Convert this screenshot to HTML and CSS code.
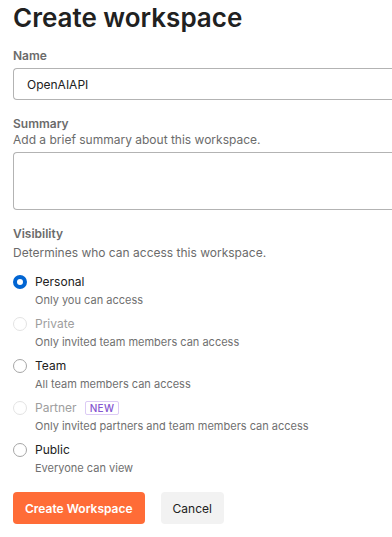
FILE: index.html
```html
<!DOCTYPE html>
<html lang="en">
<head>
    <meta charset="UTF-8">
    <meta name="viewport" content="width=device-width, initial-scale=1.0">
    <title>Create workspace</title>
    <link rel="stylesheet" href="styles.css">
</head>
<body>
    <h1 class="title">Create workspace</h1>

    <div class="field">
        <label class="label" for="wsName">Name</label>
        <input class="input" id="wsName" type="text" value="OpenAIAPI">
    </div>

    <div class="field">
        <label class="label" for="wsSummary">Summary</label>
        <div class="hint">Add a brief summary about this workspace.</div>
        <textarea class="textarea" id="wsSummary"></textarea>
    </div>

    <div class="field">
        <div class="label">Visibility</div>
        <div class="hint hint-loose">Determines who can access this workspace.</div>

        <div class="options">
            <div class="option">
                <span class="radio checked"></span>
                <div class="option-text">
                    <div class="option-name">Personal</div>
                    <div class="option-desc">Only you can access</div>
                </div>
            </div>
            <div class="option disabled">
                <span class="radio"></span>
                <div class="option-text">
                    <div class="option-name">Private</div>
                    <div class="option-desc">Only invited team members can access</div>
                </div>
            </div>
            <div class="option">
                <span class="radio"></span>
                <div class="option-text">
                    <div class="option-name">Team</div>
                    <div class="option-desc">All team members can access</div>
                </div>
            </div>
            <div class="option disabled">
                <span class="radio"></span>
                <div class="option-text">
                    <div class="option-name">Partner <span class="badge">NEW</span></div>
                    <div class="option-desc">Only invited partners and team members can access</div>
                </div>
            </div>
            <div class="option">
                <span class="radio"></span>
                <div class="option-text">
                    <div class="option-name">Public</div>
                    <div class="option-desc">Everyone can view</div>
                </div>
            </div>
        </div>
    </div>

    <div class="actions">
        <button class="btn btn-primary">Create Workspace</button>
        <button class="btn btn-secondary">Cancel</button>
    </div>
</body>
</html>
```

FILE: styles.css
```css
body {
    margin: 0;
    padding: 2px 13px 0;
    background-color: #ffffff;
    font-family: Inter, "Noto Sans", sans-serif;
    color: #212121;
}
.title {
    margin: 0 0 14px;
    font-size: 26px;
    line-height: 32px;
    font-weight: 600;
    color: #212121;
}
.field {
    margin-bottom: 16px;
}
.label {
    display: block;
    font-size: 12px;
    line-height: 16px;
    font-weight: 600;
    color: #6b6b6b;
    margin-bottom: 4px;
}
.hint {
    font-size: 12px;
    line-height: 16px;
    color: #6b6b6b;
    margin-top: -4px;
    margin-bottom: 4px;
}
.hint-loose {
    margin-top: -1px;
}
/* fields run off the right edge of the panel */
.input, .textarea {
    display: block;
    box-sizing: border-box;
    width: calc(100% + 13px);
    border: 1px solid #b3b3b3;
    border-right: none;
    border-radius: 4px 0 0 4px;
    font-family: inherit;
    font-size: 12px;
    color: #212121;
    padding: 0 13px;
    outline: none;
    margin: 0;
}
.input {
    height: 32px;
}
.textarea {
    height: 58px;
    resize: none;
}
.options {
    display: flex;
    flex-direction: column;
    gap: 6px;
    margin-top: 11px;
}
.option {
    display: flex;
    align-items: flex-start;
    gap: 8px;
}
.radio {
    box-sizing: border-box;
    width: 14px;
    height: 14px;
    margin-top: 3px;
    border-radius: 50%;
    border: 1px solid #a6a6a6;
    background: #ffffff;
    flex-shrink: 0;
}
.radio.checked {
    border: 4px solid #0265d2;
}
.option.disabled .radio {
    border-color: #e3e3e3;
}
.option-name {
    font-size: 12px;
    line-height: 20px;
    color: #212121;
    display: flex;
    align-items: center;
    gap: 8px;
}
.option.disabled .option-name {
    color: #9e9e9e;
}
.option-desc {
    font-size: 11px;
    line-height: 16px;
    color: #707070;
}
.badge {
    font-size: 10px;
    line-height: 12px;
    font-weight: 500;
    color: #8556d1;
    border: 1px solid #dccbf5;
    border-radius: 2px;
    padding: 0 4px;
    letter-spacing: 0.4px;
}
.actions {
    display: flex;
    gap: 16px;
    margin-top: 16px;
}
.btn {
    height: 32px;
    border: none;
    border-radius: 4px;
    font-family: inherit;
    font-size: 12px;
    font-weight: 600;
    padding: 0 12px;
    cursor: pointer;
}
.btn-primary {
    background-color: #ff6c37;
    color: #ffffff;
}
.btn-secondary {
    background-color: #f2f2f2;
    color: #212121;
    font-weight: 400;
}
```
